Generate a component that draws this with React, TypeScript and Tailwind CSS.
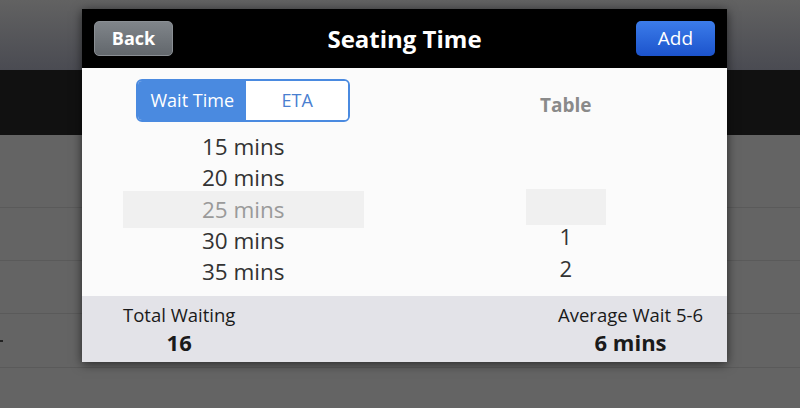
import React from "react";

const waitTimes = ["15 mins", "20 mins", "25 mins", "30 mins", "35 mins"];
const tables = ["", "", "", "1", "2"];

const App = () => {
  const selected = 2;

  return (
    <div
      className="relative w-[800px] h-[408px] overflow-hidden bg-[#646464]"
      style={{ fontFamily: '"Open Sans", "Noto Sans", sans-serif' }}
    >
      {/* screen behind the dialog */}
      <div className="h-[70px] bg-gradient-to-b from-[#626262] to-[#4a4b52]" />
      <div className="h-[65px] bg-[#111111]" />
      <div className="h-[73px] border-b border-[#5a5a5a]" />
      <div className="h-[53px] border-b border-[#5a5a5a]" />
      <div className="h-[53px] border-b border-[#5a5a5a]" />
      <div className="relative h-[54px] border-b border-[#5a5a5a]">
        <div className="absolute left-0 top-[26px] w-[3px] h-[2px] bg-[#222]" />
      </div>

      {/* dialog */}
      <div className="absolute left-[82px] top-[9px] w-[645px] shadow-[0_2px_10px_rgba(0,0,0,0.6)]">
        <div className="h-[59px] bg-black flex items-center justify-between px-[12px]">
          <button className="w-[79px] h-[35px] rounded-[5px] bg-gradient-to-b from-[#80858a] to-[#62676c] border border-[#8a8f94] text-white font-bold text-[18px]">
            Back
          </button>
          <div className="text-white font-bold text-[24px]">Seating Time</div>
          <button className="w-[79px] h-[35px] rounded-[5px] bg-gradient-to-b from-[#3c7cea] to-[#1c53cc] text-white text-[19px]">
            Add
          </button>
        </div>

        <div className="h-[228px] bg-[#fbfbfb] grid grid-cols-2">
          <div className="flex flex-col items-center pt-[11px]">
            <div className="flex w-[214px] h-[43px] rounded-[6px] border-2 border-[#4a8ae0] overflow-hidden text-[18px]">
              <div className="w-[108px] flex items-center justify-center bg-[#4a8ae0] text-white">Wait Time</div>
              <div className="flex-1 flex items-center justify-center bg-white text-[#4a7fd0]">ETA</div>
            </div>
            <div className="mt-[9px] flex flex-col items-center w-[241px]">
              {waitTimes.map((t, i) => (
                <div
                  key={t}
                  className={
                    i === selected
                      ? "w-full h-[37px] -my-[3px] flex items-center justify-center bg-[#f0f0f0] text-[#9a9a9a] text-[22.5px]"
                      : "w-full h-[31.5px] flex items-center justify-center text-[#333333] text-[22.5px]"
                  }
                >
                  {t}
                </div>
              ))}
            </div>
          </div>

          <div className="flex flex-col items-center pt-[24px]">
            <div className="text-[#8a8a8a] font-bold text-[19px] leading-[26px]">Table</div>
            <div className="mt-[12px] flex flex-col items-center w-[80px]">
              {tables.map((t, i) => (
                <div
                  key={i}
                  className={
                    i === selected
                      ? "w-full h-[36px] -my-[4px] bg-[#f0f0f0]"
                      : "w-full h-[31.5px] flex items-center justify-center text-[#333333] text-[22px]"
                  }
                >
                  {t}
                </div>
              ))}
            </div>
          </div>
        </div>

        <div className="h-[66px] bg-[#e3e3e8] flex justify-between pl-[41px] pr-[24px] pt-[7px] text-[#1a1a1a]">
          <div className="flex flex-col items-center">
            <div className="text-[18.5px] leading-[24px]">Total Waiting</div>
            <div className="font-bold text-[22px] leading-[30px]">16</div>
          </div>
          <div className="flex flex-col items-center">
            <div className="text-[18.5px] leading-[24px]">Average Wait 5-6</div>
            <div className="font-bold text-[22px] leading-[30px]">6 mins</div>
          </div>
        </div>
      </div>
    </div>
  );
};

export default App;
